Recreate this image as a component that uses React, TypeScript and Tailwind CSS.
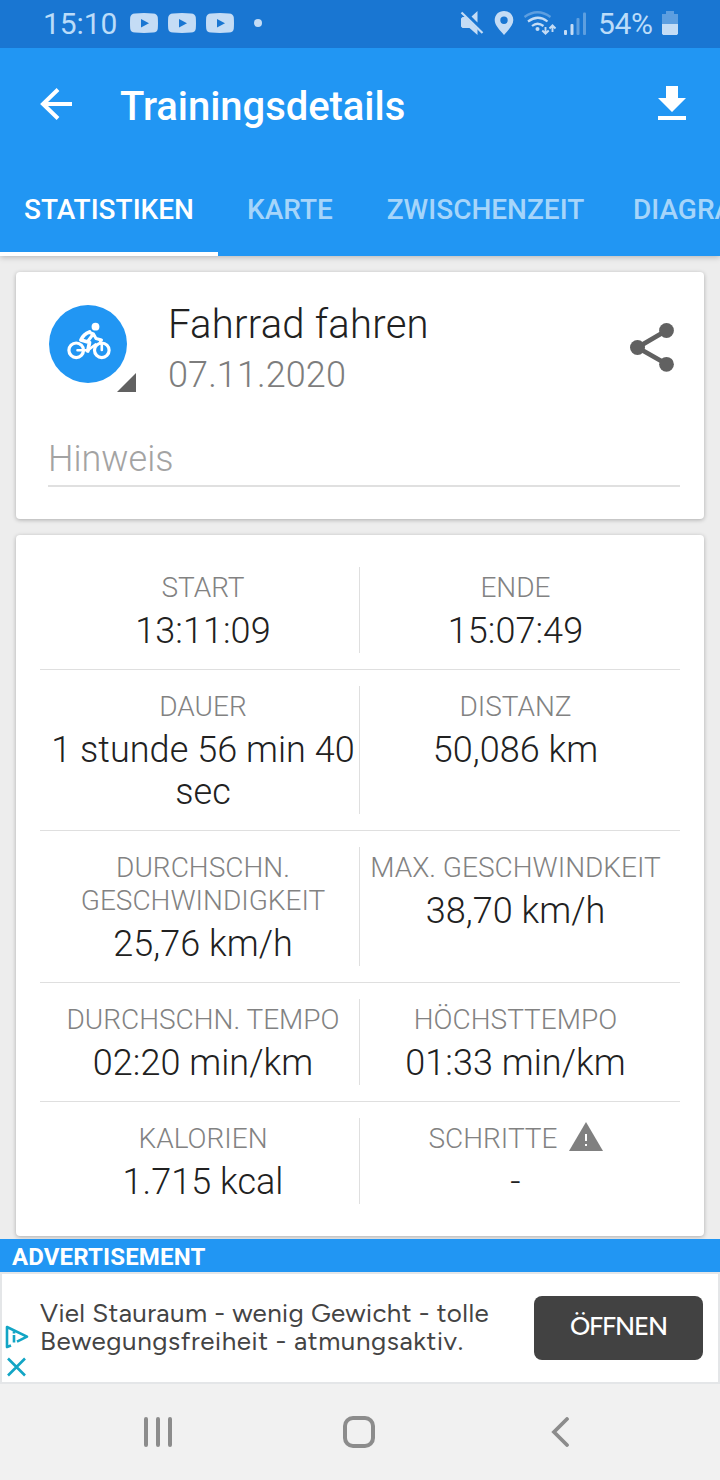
import React from "react";

function StatusBar() {
  return (
    <div className="relative z-20 flex h-12 shrink-0 items-center bg-[#1976d2] text-[#bbdcf9]">
      <span className="ml-[43px] w-[87px] text-[30px] leading-12 tracking-[-0.1px]">15:10</span>
      <div className="flex gap-[10px] pb-[2px]">
        {[0, 1, 2].map((i) => (
          <svg key={i} width="28" height="20" viewBox="0 0 28 20">
            <path d="M5 .4Q14-.4 23 .4Q27.500 .6 27.800 4.500Q28.200 10 27.800 15.500Q27.500 19.400 23 19.600Q14 20.400 5 19.600Q.5 19.400 .2 15.500Q-.2 10 .2 4.500Q.5 .6 5 .4Z" fill="#c4dcf5" />
            <path d="M11 6v8.500l8-4.200z" fill="#1976d2" />
          </svg>
        ))}
      </div>
      <div className="mb-[2px] ml-5 size-2 rounded-full bg-[#c4dcf5]" />
      <svg className="ml-auto" width="140" height="40" viewBox="455 4 140 40" fill="#c4dcf5">
        <path d="M461 18.500l1.500-1.500h3l12 12v6l-8-7h-7l-1.500-1.500z M471.500 16.500l6-5.500v11.500z" />
        <path d="M461.500 12.500l21 20.500" stroke="#c4dcf5" strokeWidth="2.200" />
        <path fillRule="evenodd" d="M504 11c-5.400 0-9.300 3.900-9.300 9 0 5.400 5 9.800 9.300 15 4.300-5.200 9.300-9.600 9.300-15 0-5.100-3.900-9-9.300-9zm0 5.500a3.700 3.700 0 1 1 0 7.400 3.700 3.700 0 0 1 0-7.400z" />
        <g fill="none" stroke="#c4dcf5" strokeWidth="2.200">
          <path d="M524.500 17q13-9.500 26 0" opacity=".4" />
          <path d="M528 21.500q10-7.500 19.500 0M532 26q5.500-4.500 11.500 0" />
          <path d="M545.500 27v6M542.300 30.500l3.200 3.200 3.200-3.200M552.500 32v-6M549.500 28.500l3-3.200 3 3.200" strokeWidth="1.900" />
        </g>
        <circle cx="537.500" cy="29" r="2" />
        <rect x="564" y="30" width="3" height="5" rx="1" />
        <rect x="570.500" y="24" width="3" height="11" rx="1" />
        <g opacity=".4">
          <rect x="576.500" y="18" width="3" height="17" rx="1" />
          <rect x="583" y="12.500" width="3" height="22.500" rx="1" />
        </g>
      </svg>
      <span className="ml-[3px] w-[57px] whitespace-nowrap text-[30px] leading-12 tracking-[-0.3px]">54%</span>
      <svg className="mr-[42px] mb-[2px] ml-[7px]" width="16" height="24" viewBox="0 0 16 24" fill="#c4dcf5">
        <path d="M4 0h8v3h4v10H0V3h4z" opacity=".4" />
        <path d="M0 13h16v9.500l-1 1.500H1l-1-1.500z" />
      </svg>
    </div>
  );
}

function Header() {
  return (
    <header className="relative z-10 flex h-[208px] shrink-0 flex-col bg-[#2196f3] shadow-[0_1px_6px_rgba(0,0,0,0.25)]">
      <div className="flex h-[112px] items-center text-white">
        <svg className="ml-[40px]" width="32" height="32" viewBox="0 0 32 32" fill="none" stroke="#fff" strokeWidth="4">
          <path d="M32 16H4M18 1.500L3 16l15 14.500" />
        </svg>
        <h1 className="ml-[48px] pt-[6px] text-[40px] font-medium tracking-[-0.05px]">Trainingsdetails</h1>
        <svg className="mr-[34px] mb-[2px] ml-auto" width="28" height="34" viewBox="0 0 28 34" fill="#fff">
          <path d="M8 0h12v12h8L14 26 0 12h8zM0 30h28v4H0z" />
        </svg>
      </div>
      <nav className="flex h-24 overflow-hidden text-[28px] leading-[33px] font-medium whitespace-nowrap text-[#a6d5fa]">
        <div className="flex w-[218px] shrink-0 justify-center border-b-4 border-white pt-[33px] text-white">STATISTIKEN</div>
        <div className="w-[144px] shrink-0 pt-[33px] text-center">KARTE</div>
        <div className="w-[247px] shrink-0 pt-[33px] text-center">ZWISCHENZEIT</div>
        <div className="shrink-0 pt-[33px] pl-6">DIAGRAMM</div>
      </nav>
    </header>
  );
}

function Cyclist() {
  return (
    <svg width="78" height="78" viewBox="49 305 78 78">
      <circle cx="88" cy="344" r="39" fill="#2196f3" />
      <g fill="none" stroke="#fff" strokeWidth="3.200" strokeLinecap="round">
        <circle cx="76.200" cy="350.300" r="7.300" />
        <circle cx="101.800" cy="350.300" r="7.300" />
        <path d="M77.500 350.300H88L95.500 344.500M101.800 350v-5l-2-5" strokeWidth="2.600" />
        <path d="M89.500 332q-6 2-8.500 8l8.500 2.500-1.700 8.500" strokeWidth="3.800" strokeLinejoin="round" />
        <path d="M89.500 332.500l4 1.500 2.500 4.500 5.500 1.500M92.500 335l-4.500 6" strokeWidth="3" strokeLinejoin="round" />
      </g>
      <circle cx="95.500" cy="326.700" r="3.900" fill="#fff" />
    </svg>
  );
}

function ActivityCard() {
  return (
    <section className="h-[247px] rounded-[4px] bg-white pr-6 pl-8 shadow-[0_1px_4px_rgba(0,0,0,0.28)]">
      <div className="flex h-[160px] pt-[33px]">
        <div className="relative h-[88px] w-[88px] pl-px">
          <Cyclist />
          <svg className="absolute right-0 bottom-[1px]" width="19" height="19" viewBox="0 0 19 19">
            <path d="M19 0v19H0z" fill="#616161" />
          </svg>
        </div>
        <div className="ml-8">
          <div className="-mt-[4px] text-[40px] leading-[47px] font-light tracking-[0.25px] text-[#212121]">Fahrrad fahren</div>
          <div className="mt-[6px] text-[36px] leading-[42px] font-light tracking-[0.1px] text-[#7d7d7d]">07.11.2020</div>
        </div>
        <svg className="mt-[18px] mr-[6px] ml-auto" width="44" height="49" viewBox="0 0 44 49" fill="#616161">
          <path d="M36.500 7.500l-29 17 29 16.500" fill="none" stroke="#616161" strokeWidth="4.800" />
          <circle cx="36.500" cy="7.500" r="7.400" />
          <circle cx="7.500" cy="24.500" r="7.500" />
          <circle cx="36.500" cy="41.300" r="7.400" />
        </svg>
      </div>
      <div className="h-[55px] border-b-2 border-[#e0e0e0] pt-[6px] text-[36px] leading-[42px] font-light text-[#a3a3a3]">Hinweis</div>
    </section>
  );
}

type Stat = { label: React.ReactNode; value: string };

function Cell({ label, value }: Stat) {
  return (
    <div className="pt-1 pr-px pb-px text-center font-light">
      <div className="text-[28px] leading-[33px] text-[#828282]">{label}</div>
      <div className="mt-[6px] text-[36px] leading-[42px] tracking-[0.05px] text-[#212121]">{value}</div>
    </div>
  );
}

const rows: [Stat, Stat][] = [
  [{ label: "START", value: "13:11:09" }, { label: "ENDE", value: "15:07:49" }],
  [{ label: "DAUER", value: "1 stunde 56 min 40 sec" }, { label: "DISTANZ", value: "50,086 km" }],
  [{ label: "DURCHSCHN. GESCHWINDIGKEIT", value: "25,76 km/h" }, { label: "MAX. GESCHWINDKEIT", value: "38,70 km/h" }],
  [{ label: "DURCHSCHN. TEMPO", value: "02:20 min/km" }, { label: "HÖCHSTTEMPO", value: "01:33 min/km" }],
  [
    { label: "KALORIEN", value: "1.715 kcal" },
    {
      label: (
        <span className="flex items-center justify-center">
          SCHRITTE
          <svg className="mb-[4px] ml-[11px]" width="34" height="29" viewBox="0 0 34 29">
            <path d="M17 0l17 29H0z" fill="#808080" />
            <path d="M16 12h2v7h-2zM16 22h2v2h-2z" fill="#fff" />
          </svg>
        </span>
      ),
      value: "-",
    },
  ],
];

function StatsCard() {
  return (
    <section className="mt-4 h-[701px] rounded-[4px] bg-white px-6 pt-4 shadow-[0_1px_4px_rgba(0,0,0,0.28)]">
      {rows.map(([left, right], i) => (
        <div key={i} className="grid grid-cols-[311px_1px_312px] border-b border-[#dfdfdf] px-2 py-4 last:border-b-0">
          <Cell {...left} />
          <div className="bg-[#dfdfdf]" />
          <Cell {...right} />
        </div>
      ))}
    </section>
  );
}

function Ad() {
  return (
    <div className="relative z-10 shrink-0">
      <div className="flex h-[33px] items-center bg-[#2196f3] pt-[2px] pl-3 text-[24px] font-bold tracking-[0.15px] text-white">ADVERTISEMENT</div>
      <div className="flex h-[112px] items-center border-2 border-[#e4e6e8] bg-white">
        <svg className="mt-[45px] ml-[3px]" width="24" height="54" viewBox="0 0 24 54" fill="none" stroke="#12a5c5" strokeWidth="2.600">
          <path d="M6 21.500l-4 1.500V3l20 9.700-10 5" strokeLinejoin="round" />
          <path d="M9 11v7.500M9 7.200v2.200M3 34.500l17 17M20 34.500l-17 17" />
        </svg>
        <div className="ml-[11px] pb-[2px] font-[Figtree,Lato,sans-serif] text-[26px] leading-[28px] whitespace-nowrap text-[#444]">
          <div className="h-7 tracking-[0.37px]">Viel Stauraum - wenig Gewicht - tolle</div>
          <div className="h-7 tracking-[0.57px]">Bewegungsfreiheit - atmungsaktiv.</div>
        </div>
        <button className="mr-[15px] ml-auto h-16 w-[169px] rounded-[8px] bg-[#424242] pb-1 font-[Figtree,Lato,sans-serif] text-[26px] font-medium tracking-[-1.2px] text-white">ÖFFNEN</button>
      </div>
    </div>
  );
}

function NavBar() {
  return (
    <div className="flex h-24 shrink-0 items-center bg-[#f1f1f1]">
      <svg className="ml-[143px]" width="30" height="30" viewBox="0 0 30 30" stroke="#8c8c8c" strokeWidth="4" strokeLinecap="round">
        <path d="M3 2v26M15 2v26M27 2v26" />
      </svg>
      <div className="ml-[170px] size-8 rounded-[10px] border-4 border-[#8c8c8c]" />
      <svg className="ml-[176px]" width="20" height="30" viewBox="0 0 20 30" fill="none" stroke="#8c8c8c" strokeWidth="3.800" strokeLinecap="round">
        <path d="M16 2L3 15l13 13" />
      </svg>
    </div>
  );
}

export default function App() {
  return (
    <div className="flex h-[1480px] w-[720px] flex-col overflow-hidden bg-[#ededed] font-[Roboto,sans-serif]">
      <StatusBar />
      <Header />
      <main className="h-[983px] shrink-0 px-4 pt-4">
        <ActivityCard />
        <StatsCard />
      </main>
      <Ad />
      <NavBar />
    </div>
  );
}
